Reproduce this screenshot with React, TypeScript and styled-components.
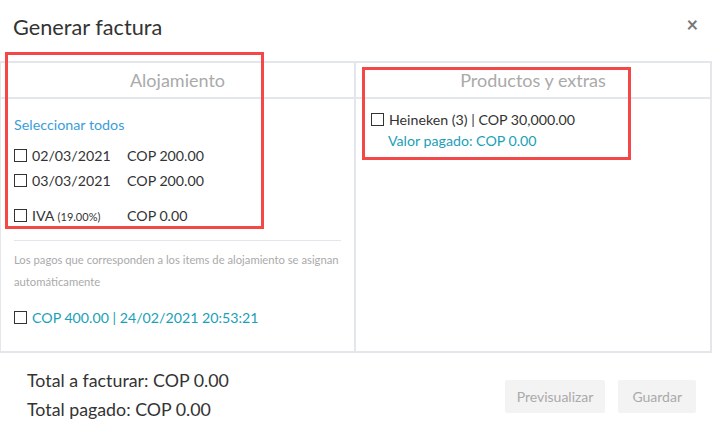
import React from "react";
import styled, { createGlobalStyle } from "styled-components";

const Global = createGlobalStyle`
  html, body { margin: 0; padding: 0; background: #fff; }
  body { font-family: Lato, "Open Sans", sans-serif; color: #333; }
  * { box-sizing: border-box; }
`;

const Modal = styled.div`
  position: relative;
  width: 712px;
  height: 439px;
  background: #fff;
  display: flex;
  flex-direction: column;
`;

const Header = styled.div`
  height: 61px;
  display: flex;
  align-items: center;
  justify-content: space-between;
  padding: 0 14px 8px 13px;
`;

const Title = styled.h2`
  margin: 0;
  font-size: 21.7px;
  font-weight: 400;
  color: #333;
`;

const Close = styled.span`
  font-size: 20px;
  color: #777;
  font-weight: 700;
  line-height: 1;
  margin-top: -5px;
`;

const Table = styled.div`
  display: grid;
  grid-template-columns: 356px 1fr;
  height: 292px;
  border-top: 2px solid #e3e6ea;
  border-bottom: 2px solid #e3e6ea;
`;

const Column = styled.div<{ $first?: boolean }>`
  display: flex;
  flex-direction: column;
  border-left: ${(p) => (p.$first ? "1px solid #e3e6ea" : "none")};
  border-right: 2px solid #e3e6ea;
`;

const ColHead = styled.div`
  height: 36px;
  border-bottom: 2px solid #e3e6ea;
  display: flex;
  align-items: center;
  justify-content: center;
  font-size: 18px;
  color: #aaa;
`;

const ColBody = styled.div<{ $pad: string }>`
  padding: ${(p) => p.$pad};
  display: flex;
  flex-direction: column;
`;

const LinkText = styled.div`
  color: #3a9ed8;
  font-size: 14.3px;
  margin-bottom: 10px;
`;

const Row = styled.div<{ $mt?: number }>`
  display: flex;
  align-items: center;
  height: 25px;
  font-size: 14.2px;
  color: #333;
  margin-top: ${(p) => p.$mt ?? 0}px;
`;

const Box = styled.span`
  width: 13px;
  height: 13px;
  border: 1px solid #333;
  margin-right: 5px;
  flex: none;
`;

const DateCell = styled.span`
  width: 95px;
`;

const Small = styled.span`
  font-size: 11px;
`;

const Sep = styled.div`
  height: 1px;
  background: #e3e6ea;
  margin: 12px 0 8px;
`;

const Note = styled.div`
  font-size: 11.25px;
  line-height: 22px;
  color: #aaa;
  margin-bottom: 12px;
`;

const Teal = styled.span`
  color: #1aa0b8;
`;

const Sub = styled.div`
  color: #1aa0b8;
  font-size: 14.2px;
  padding-left: 17px;
  line-height: 18px;
`;

const Footer = styled.div`
  flex: 1;
  display: flex;
  align-items: center;
  justify-content: space-between;
  padding: 0 16px 2px 27px;
`;

const Totals = styled.div`
  font-size: 17.8px;
  line-height: 29px;
  color: #333;
`;

const Buttons = styled.div`
  display: flex;
  gap: 13px;
  margin-top: 2px;
`;

const Button = styled.button<{ $px?: number }>`
  font-family: inherit;
  font-size: 14px;
  color: #aaa;
  background: #f3f3f3;
  border: none;
  border-radius: 2px;
  height: 33px;
  padding: 0 ${(p) => p.$px ?? 12}px;
`;

const Annot = styled.div<{ $x: number; $y: number; $w: number; $h: number }>`
  position: absolute;
  left: ${(p) => p.$x}px;
  top: ${(p) => p.$y}px;
  width: ${(p) => p.$w}px;
  height: ${(p) => p.$h}px;
  border: 3px solid #f44848;
  pointer-events: none;
`;

export default function App() {
  return (
    <>
      <Global />
      <Modal>
        <Header>
          <Title>Generar factura</Title>
          <Close>×</Close>
        </Header>
        <Table>
          <Column $first>
            <ColHead>Alojamiento</ColHead>
            <ColBody $pad="17px 13px 0 13px">
              <LinkText>Seleccionar todos</LinkText>
              <Row>
                <Box />
                <DateCell>02/03/2021</DateCell>COP 200.00
              </Row>
              <Row>
                <Box />
                <DateCell>03/03/2021</DateCell>COP 200.00
              </Row>
              <Row $mt={10}>
                <Box />
                <DateCell>
                  IVA <Small>(19.00%)</Small>
                </DateCell>
                COP 0.00
              </Row>
              <Sep />
              <Note>
                Los pagos que corresponden a los items de alojamiento se asignan automáticamente
              </Note>
              <Row>
                <Box />
                <Teal>COP 400.00 | 24/02/2021 20:53:21</Teal>
              </Row>
            </ColBody>
          </Column>
          <Column>
            <ColHead>Productos y extras</ColHead>
            <ColBody $pad="8px 14px 0 15px">
              <Row>
                <Box />
                Heineken (3) | COP 30,000.00
              </Row>
              <Sub>Valor pagado: COP 0.00</Sub>
            </ColBody>
          </Column>
        </Table>
        <Footer>
          <Totals>
            <div>Total a facturar: COP 0.00</div>
            <div>Total pagado: COP 0.00</div>
          </Totals>
          <Buttons>
            <Button>Previsualizar</Button>
            <Button $px={14}>Guardar</Button>
          </Buttons>
        </Footer>
        <Annot $x={5} $y={52} $w={259} $h={177} />
        <Annot $x={362} $y={67} $w={269} $h={93} />
      </Modal>
    </>
  );
}
